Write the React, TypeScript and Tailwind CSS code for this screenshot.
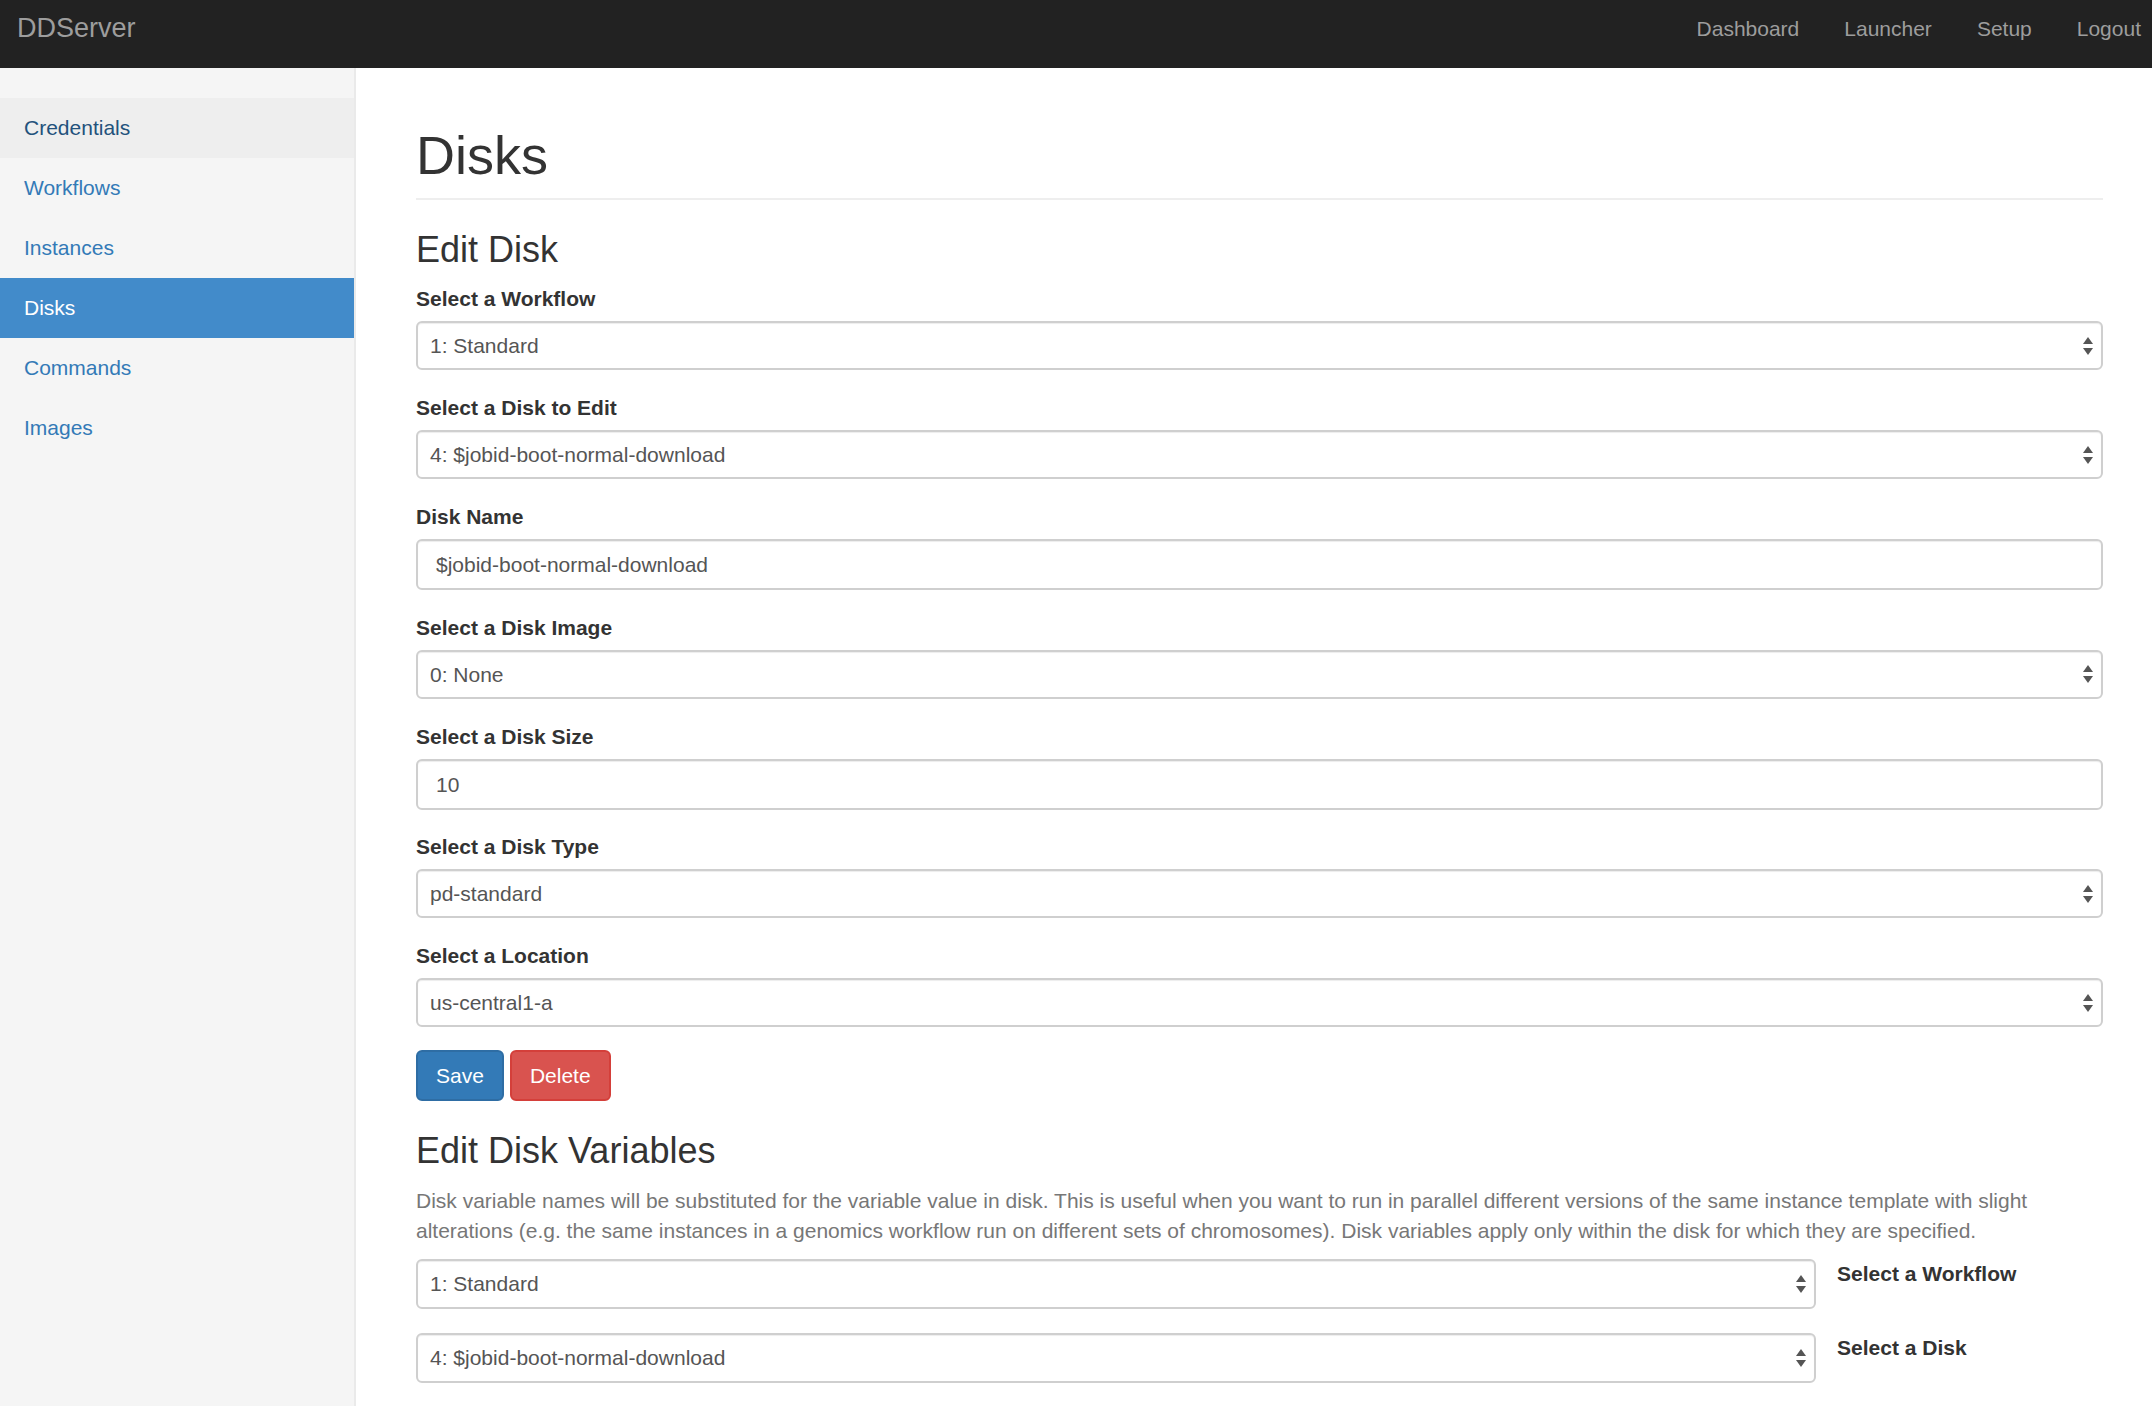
import type { ReactNode } from "react";

const font = { fontFamily: '"Liberation Sans", Arial, Helvetica, sans-serif' };

const sideItems = ["Credentials", "Workflows", "Instances", "Disks", "Commands", "Images"];
const navLinks = ["Dashboard", "Launcher", "Setup", "Logout"];

function Arrows() {
  return (
    <svg width="10" height="18" viewBox="0 0 10 18" className="shrink-0">
      <polygon points="0,7 5,0 10,7" fill="#555" />
      <polygon points="0,11 10,11 5,18" fill="#555" />
    </svg>
  );
}

function FakeSelect({ value, className = "" }: { value: string; className?: string }) {
  return (
    <div
      className={
        "flex h-[49px] items-center justify-between rounded-[6px] border-2 border-[#cfcfcf] bg-white pl-[12px] pr-[8px] text-[21px] text-[#555] shadow-[inset_0_1px_1px_rgba(0,0,0,0.075)] " +
        className
      }
    >
      <span>{value}</span>
      <Arrows />
    </div>
  );
}

function Group({ label, children }: { label: string; children: ReactNode }) {
  return (
    <div>
      <label className="mb-[7px] block text-[21px] font-bold leading-[30px] text-[#333]">{label}</label>
      {children}
    </div>
  );
}

function SelectGroup({ label, value }: { label: string; value: string }) {
  return (
    <div className="mb-[23px]">
      <Group label={label}>
        <FakeSelect value={value} />
      </Group>
    </div>
  );
}

function InputGroup({ label, value }: { label: string; value: string }) {
  return (
    <div className="mb-[22.5px]">
      <Group label={label}>
        <div className="flex h-[51px] items-center rounded-[6px] border-2 border-[#cfcfcf] bg-white pl-[18px] text-[21px] text-[#555] shadow-[inset_0_1px_1px_rgba(0,0,0,0.075)]">
          {value}
        </div>
      </Group>
    </div>
  );
}

export default function App() {
  return (
    <div style={font} className="min-h-screen bg-white text-[21px] text-[#333]">
      <header className="flex h-[68px] items-start justify-between bg-[#222]">
        <a className="pl-[17px] pt-[15px] text-[27px] leading-none text-[#9d9d9d]">DDServer</a>
        <nav className="flex gap-[45px] pr-[11px] pt-[18px]">
          {navLinks.map((l) => (
            <a key={l} className="text-[21px] leading-none text-[#9d9d9d]">
              {l}
            </a>
          ))}
        </nav>
      </header>

      <div className="flex min-h-[1338px]">
        <aside className="w-[356px] shrink-0 border-r-2 border-[#eaeaea] bg-[#f5f5f5] pt-[30px]">
          <ul>
            {sideItems.map((item) => (
              <li
                key={item}
                className={
                  item === "Disks"
                    ? "flex h-[60px] items-center bg-[#428bca] pl-[24px] text-white"
                    : item === "Credentials"
                    ? "flex h-[60px] items-center bg-[#eee] pl-[24px] text-[#23527c]"
                    : "flex h-[60px] items-center pl-[24px] text-[#337ab7]"
                }
              >
                {item}
              </li>
            ))}
          </ul>
        </aside>

        <main className="min-w-0 flex-1 pl-[60px] pr-[49px] pt-[58px]">
          <h1 className="mb-[30px] border-b-2 border-[#eee] pb-[12.5px] text-[54px] leading-[1.1]">Disks</h1>

          <h3 className="mb-[15px] text-[36px] leading-[1.1]">Edit Disk</h3>
          <SelectGroup label="Select a Workflow" value="1: Standard" />
          <SelectGroup label="Select a Disk to Edit" value="4: $jobid-boot-normal-download" />
          <InputGroup label="Disk Name" value="$jobid-boot-normal-download" />
          <SelectGroup label="Select a Disk Image" value="0: None" />
          <InputGroup label="Select a Disk Size" value="10" />
          <SelectGroup label="Select a Disk Type" value="pd-standard" />
          <SelectGroup label="Select a Location" value="us-central1-a" />

          <div className="flex gap-[6px]">
            <button className="h-[51px] rounded-[6px] border-2 border-[#2e6da4] bg-[#337ab7] px-[18px] text-[21px] text-white">
              Save
            </button>
            <button className="h-[51px] rounded-[6px] border-2 border-[#d43f3a] bg-[#d9534f] px-[18px] text-[21px] text-white">
              Delete
            </button>
          </div>

          <h3 className="mb-[15px] mt-[30px] text-[36px] leading-[1.1]">Edit Disk Variables</h3>
          <p className="mb-[13px] leading-[30px] text-[#777]">
            Disk variable names will be substituted for the variable value in disk. This is useful when you want to run in
            parallel different versions of the same instance template with slight
            <br />
            alterations (e.g. the same instances in a genomics workflow run on different sets of chromosomes). Disk variables
            apply only within the disk for which they are specified.
          </p>

          <div className="mb-[24px] flex items-start gap-[21px]">
            <FakeSelect value="1: Standard" className="h-[50px] w-[1400px] shrink-0" />
            <span className="font-bold leading-[30px]">Select a Workflow</span>
          </div>
          <div className="flex items-start gap-[21px]">
            <FakeSelect value="4: $jobid-boot-normal-download" className="h-[50px] w-[1400px] shrink-0" />
            <span className="font-bold leading-[30px]">Select a Disk</span>
          </div>
        </main>
      </div>
    </div>
  );
}
